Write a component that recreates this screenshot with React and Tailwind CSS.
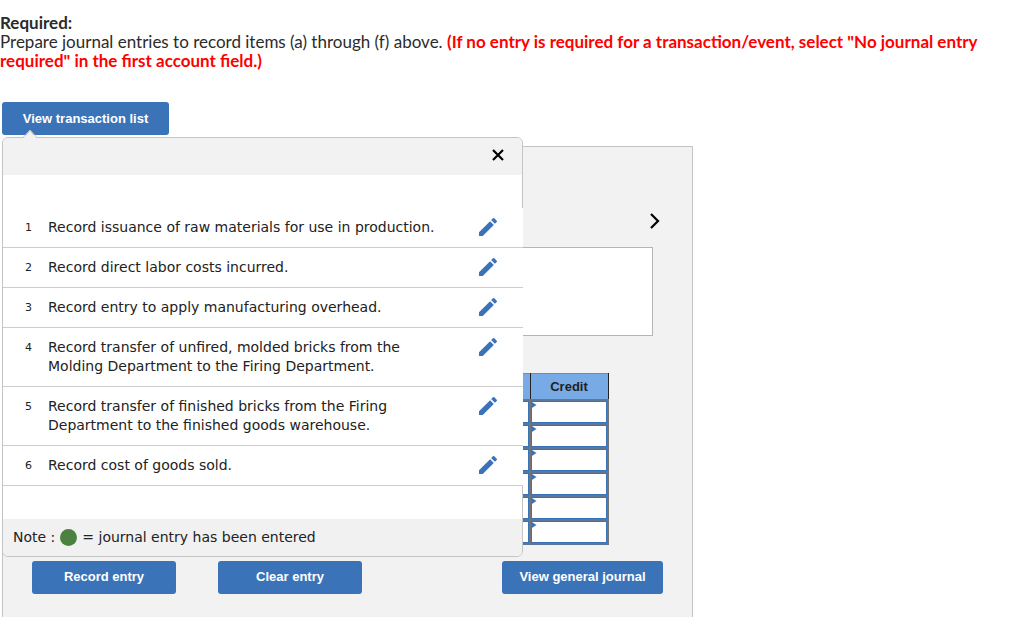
import { useState } from 'react';
import { MdEdit } from 'react-icons/md';

const transactions = [
  'Record issuance of raw materials for use in production.',
  'Record direct labor costs incurred.',
  'Record entry to apply manufacturing overhead.',
  'Record transfer of unfired, molded bricks from the Molding Department to the Firing Department.',
  'Record transfer of finished bricks from the Firing Department to the finished goods warehouse.',
  'Record cost of goods sold.',
];

const rows = [1, 2, 3, 4, 5, 6];

const buttonStyle = "h-[33px] rounded-[3px] bg-[#3b73b9] font-['Liberation_Sans',sans-serif] text-[13px] font-bold text-white cursor-pointer";

function Cell({ label }) {
  return (
    <td className="relative border-2 border-x-[#77736f] border-y-[#5c7699] p-0">
      <input type="text" aria-label={label} className="block h-[22px] w-full border border-[#3b73b9] bg-white px-2 text-[13px] outline-none" />
      <svg className="absolute left-0 top-0" width="6" height="8" viewBox="0 0 6 8" aria-hidden="true">
        <path d="M0 0.5L5.5 4L0 7.5z" fill="#3b73b9" />
      </svg>
    </td>
  );
}

function TransactionList({ onClose }) {
  return (
    <div className="absolute left-0 top-[35px] w-full max-w-[521px] font-['DejaVu_Sans',sans-serif] text-[14px] leading-[19px] text-[#222]">
      <svg className="absolute -top-2 left-5" width="16" height="10" viewBox="0 0 16 10" aria-hidden="true">
        <path d="M1 9.5L8 1.5L15 9.5z" fill="#f2f2f2" />
        <path d="M1 8.5L8 1L15 8.5" fill="none" stroke="#c4c4c4" strokeWidth="1" />
      </svg>

      <div className="rounded-md border border-[#c4c4c4] bg-white">
        <div className="flex h-[37px] items-center justify-end rounded-t-md bg-[#f2f2f2] pr-4 pb-1">
          <button type="button" aria-label="Close" className="cursor-pointer" onClick={onClose}>
            <svg width="16" height="16" viewBox="0 0 16 16" fill="none" stroke="#000" strokeWidth="2.2">
              <path d="M3 3L13 13M13 3L3 13" />
            </svg>
          </button>
        </div>

        <ol className="-mr-px mt-[33px] bg-white">
          {transactions.map((text, index) => (
            <li key={index} className="flex items-start border-b border-[#cdcdcd] py-[10px]">
              <span className="w-[45px] shrink-0 pl-[22px] text-[11px]">{index + 1}</span>
              <span className="w-[400px]">{text}</span>
              <button type="button" aria-label={`Edit entry ${index + 1}`} className="ml-auto mr-[23px] flex h-[17px] shrink-0 cursor-pointer items-center text-[#3b73b9]">
                <MdEdit size={24} />
              </button>
            </li>
          ))}
        </ol>

        <div className="mt-[33px] flex h-[37px] items-center gap-[5px] rounded-b-md bg-[#f1f1f1] pl-[10px]">
          <span>Note :</span>
          <span className="size-[17px] rounded-full bg-[#4b8240]"></span>
          <span>= journal entry has been entered</span>
        </div>
      </div>
    </div>
  );
}

export default function App() {
  const [open, setOpen] = useState(true);

  return (
    <div className="bg-white pt-[13px]">
      <div className="max-w-[1000px] font-['Lato',sans-serif] text-[17px] leading-[19px] text-[#2b2b2b]">
        <h1 className="font-bold">Required:</h1>
        <p>
          Prepare journal entries to record items (a) through (f) above.{' '}
          <strong className="font-bold text-[#f00]">
            (If no entry is required for a transaction/event, select "No journal entry required" in the first account field.)
          </strong>
        </p>
      </div>

      <div className="relative ml-[2px] mt-8 max-w-[691px]">
        <button type="button" className={`${buttonStyle} block w-[167px]`} onClick={() => setOpen(!open)}>
          View transaction list
        </button>

        <main className="mt-[11px] border border-b-0 border-[#c4c4c4] bg-[#f2f2f2] px-[29px] pb-[23px]">
          <div className="flex justify-end pt-[62px]">
            <button type="button" aria-label="Next" className="cursor-pointer">
              <svg width="16" height="24" viewBox="0 0 16 24" fill="none" stroke="#000" strokeWidth="2.2">
                <path d="M4 5L11 12L4 19" />
              </svg>
            </button>
          </div>

          <div className="mt-[14px] pr-[10px]">
            <textarea aria-label="Transaction" className="block h-[89px] w-full resize-none border border-[#b5b5b5] bg-white p-2 text-[13px] outline-none" />
          </div>

          <div className="mt-[37px] pr-[54px]">
            <table className="w-full table-fixed border-collapse font-['Liberation_Sans',sans-serif]">
              <thead>
                <tr className="h-[26px] bg-[#78aae5] text-[13px] text-[#222]">
                  <td className="border border-[#222] border-t-[#888]"></td>
                  <td className="w-[78px] border border-[#222] border-t-[#888]"></td>
                  <th scope="col" className="w-[78px] border border-[#222] border-t-[#888] font-bold">Credit</th>
                </tr>
              </thead>
              <tbody>
                {rows.map((row) => (
                  <tr key={row}>
                    <Cell label={`Account ${row}`} />
                    <Cell label={`Debit ${row}`} />
                    <Cell label={`Credit ${row}`} />
                  </tr>
                ))}
              </tbody>
            </table>
          </div>

          <div className="mt-[16px] flex">
            <button type="button" className={`${buttonStyle} w-36`}>Record entry</button>
            <button type="button" className={`${buttonStyle} ml-[42px] w-36`}>Clear entry</button>
            <button type="button" className={`${buttonStyle} ml-auto w-[161px]`}>View general journal</button>
          </div>
        </main>

        {open && <TransactionList onClose={() => setOpen(false)} />}
      </div>
    </div>
  );
}
